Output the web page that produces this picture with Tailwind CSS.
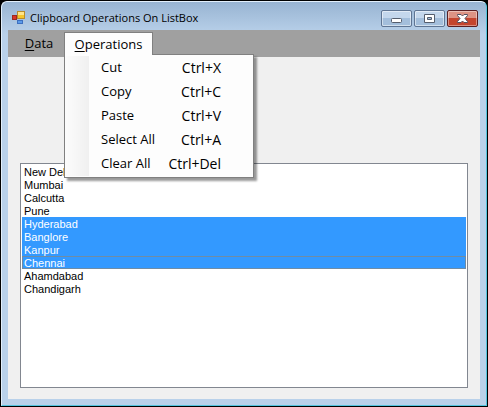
<!DOCTYPE html>
<html lang="en">
<head>
<meta charset="utf-8">
<title>Clipboard Operations On ListBox</title>
<script src="https://cdn.jsdelivr.net/npm/@tailwindcss/browser@4"></script>
</head>
<body class="h-screen bg-black p-px font-['Open_Sans',sans-serif] text-black">
<div class="flex h-full flex-col overflow-hidden rounded-t-md border border-[#e2effb] border-r-[#54c4de] border-b-[#54c4de] bg-[#b9d1ea] bg-linear-to-b from-[#98b4d2] from-0% via-[#b9d1ea] via-8% to-[#b9d1ea] px-1.5 pb-1.5">
  <header class="flex h-7 shrink-0 items-center gap-1 pt-1 pr-0.5 pl-1">
    <svg class="size-3.5 shrink-0" viewBox="0 0 14 14" aria-hidden="true">
      <rect x="5.500" y="0.500" width="7" height="7" fill="#f6c62c" stroke="#b98c2b"/>
      <rect x="6" y="1" width="6" height="3" fill="#ffe58a"/>
      <rect x="0.500" y="4.500" width="4" height="4" fill="#d8352a" stroke="#9c2a20"/>
      <rect x="5.500" y="9.500" width="5" height="3" fill="#5b9bea" stroke="#3d70c0"/>
    </svg>
    <h1 class="flex-1 text-[11px] whitespace-nowrap">Clipboard Operations On ListBox</h1>
    <div class="flex gap-0.5">
      <button aria-label="Minimize" class="flex h-[17px] w-[31px] items-center justify-center rounded-xs border border-[#5f7593] bg-linear-to-b from-[#c4d7ec] from-50% to-[#a3bedb] to-50% inset-ring inset-ring-white/50">
        <svg class="h-[15px] w-[29px]" viewBox="0 0 29 15"><rect x="9.500" y="7.500" width="10" height="4" rx="1" fill="#fff" stroke="#545d6c"/></svg>
      </button>
      <button aria-label="Maximize" class="flex h-[17px] w-[31px] items-center justify-center rounded-xs border border-[#5f7593] bg-linear-to-b from-[#c4d7ec] from-50% to-[#a3bedb] to-50% inset-ring inset-ring-white/50">
        <svg class="h-[15px] w-[29px]" viewBox="0 0 29 15"><path fill="#fff" fill-rule="evenodd" stroke="#545d6c" d="M9.500 3.500h10v8h-10zM12.500 6.500h4v2h-4z"/></svg>
      </button>
      <button aria-label="Close" class="flex h-[17px] w-[31px] items-center justify-center rounded-xs border border-[#5a1f22] bg-linear-to-b from-[#dd9384] from-50% to-[#c4452e] to-50% inset-ring inset-ring-white/40">
        <svg class="h-[15px] w-[29px]" viewBox="0 0 29 15"><path fill="#fff" stroke="#545060" d="M9.500 3.500h3.500l1.500 1.500 1.500-1.500h3.500v1l-2.500 3 2.500 3v1h-3.500l-1.500-1.500-1.500 1.500h-3.500v-1l2.500-3-2.500-3z"/></svg>
      </button>
    </div>
  </header>
  <div class="flex min-h-0 flex-1 flex-col bg-[#f0f0f0]">
    <nav class="flex h-[27px] shrink-0 items-start bg-[#a0a0a0] pt-0.5 pl-1.5 text-[13px]">
      <button class="h-[23px] w-[50px] pt-px"><u class="underline-offset-2">D</u>ata</button>
      <div class="relative">
        <button aria-expanded="true" class="relative z-20 h-[23px] w-[89px] border border-b-0 border-[#808080] bg-[#fdfdfd] pt-px"><u class="underline-offset-2">O</u>perations</button>
        <div class="absolute top-[22px] left-0 z-10 w-[190px] border border-[#808080] bg-[#fdfdfd] py-px shadow-[3px_3px_2px_rgba(0,0,0,0.4)]">
          <div class="bg-linear-to-r from-[#fcfcfc] to-[#f0f0f0] bg-[length:24px_100%] bg-no-repeat">
            <button class="flex h-6 w-full items-center justify-between pr-8 pl-9"><span>Cut</span><span class="text-sm">Ctrl+X</span></button>
            <button class="flex h-6 w-full items-center justify-between pr-8 pl-9"><span>Copy</span><span class="text-sm">Ctrl+C</span></button>
            <button class="flex h-6 w-full items-center justify-between pr-8 pl-9"><span>Paste</span><span class="text-sm">Ctrl+V</span></button>
            <button class="flex h-6 w-full items-center justify-between pr-8 pl-9"><span>Select All</span><span class="text-sm">Ctrl+A</span></button>
            <button class="flex h-6 w-full items-center justify-between pr-8 pl-9"><span>Clear All</span><span class="text-sm">Ctrl+Del</span></button>
          </div>
        </div>
      </div>
    </nav>
    <main class="flex min-h-0 flex-1 px-3 pt-[106px] pb-[11px]">
      <select multiple aria-label="Cities" class="h-full w-full overflow-hidden rounded-none border border-[#828790] bg-white p-px font-['Liberation_Sans',sans-serif] text-[11px] leading-[13px] *:h-[13px] *:min-h-0 *:px-0.5 *:pt-px *:pb-0 *:checked:bg-[#3399ff] *:checked:bg-linear-to-r *:checked:from-[#3399ff] *:checked:to-[#3399ff] *:checked:text-white">
        <option>New Delhi</option>
        <option>Mumbai</option>
        <option>Calcutta</option>
        <option>Pune</option>
        <option selected>Hyderabad</option>
        <option selected>Banglore</option>
        <option selected>Kanpur</option>
        <option selected class="border border-solid border-[#6f8ca4] px-px! pt-0!">Chennai</option>
        <option>Ahamdabad</option>
        <option>Chandigarh</option>
      </select>
    </main>
  </div>
</div>
</body>
</html>
